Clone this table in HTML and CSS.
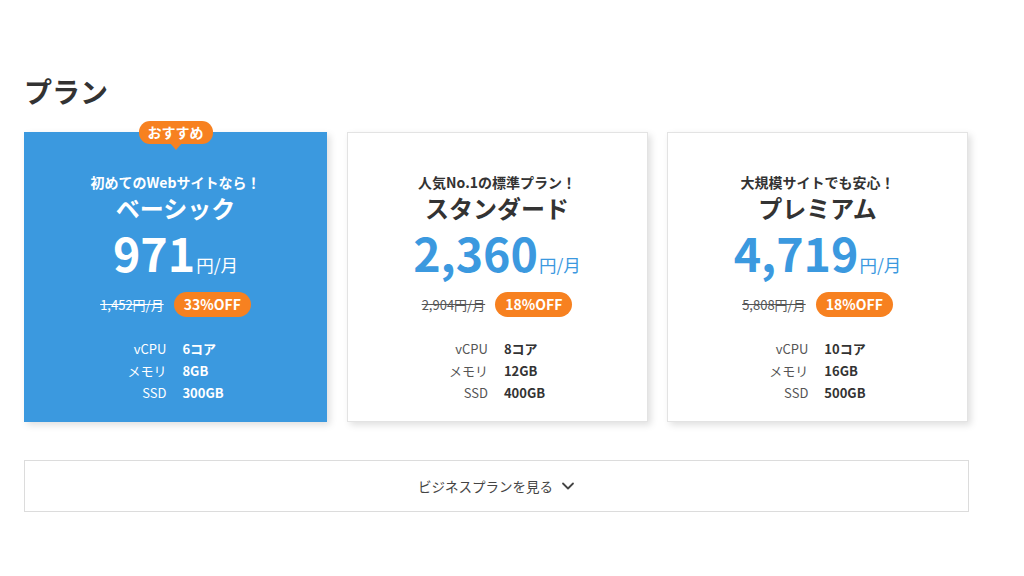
FILE: index.html
```html
<!DOCTYPE html>
<html lang="ja">
<head>
<meta charset="utf-8">
<link rel="stylesheet" href="styles.css">
</head>
<body>
<section class="plans">
  <h2 class="title">プラン</h2>
  <div class="cards">
    <div class="card card-featured">
      <div class="badge">おすすめ</div>
      <p class="lead">初めてのWebサイトなら！</p>
      <h3 class="name">ベーシック</h3>
      <p class="price"><span class="num">971</span><span class="unit">円/月</span></p>
      <div class="disc"><span class="old">1,452円/月</span><span class="off">33%OFF</span></div>
      <dl class="spec">
        <dt>vCPU</dt><dd>6コア</dd>
        <dt>メモリ</dt><dd>8GB</dd>
        <dt>SSD</dt><dd>300GB</dd>
      </dl>
    </div>
    <div class="card">
      <p class="lead">人気No.1の標準プラン！</p>
      <h3 class="name">スタンダード</h3>
      <p class="price"><span class="num">2,360</span><span class="unit">円/月</span></p>
      <div class="disc"><span class="old">2,904円/月</span><span class="off">18%OFF</span></div>
      <dl class="spec">
        <dt>vCPU</dt><dd>8コア</dd>
        <dt>メモリ</dt><dd>12GB</dd>
        <dt>SSD</dt><dd>400GB</dd>
      </dl>
    </div>
    <div class="card">
      <p class="lead">大規模サイトでも安心！</p>
      <h3 class="name">プレミアム</h3>
      <p class="price"><span class="num">4,719</span><span class="unit">円/月</span></p>
      <div class="disc"><span class="old">5,808円/月</span><span class="off">18%OFF</span></div>
      <dl class="spec">
        <dt>vCPU</dt><dd>10コア</dd>
        <dt>メモリ</dt><dd>16GB</dd>
        <dt>SSD</dt><dd>500GB</dd>
      </dl>
    </div>
  </div>
  <button class="more">ビジネスプランを見る<svg class="chev" width="14" height="14" viewBox="0 0 14 14"><path d="M2 4.5 L7 9.5 L12 4.5" fill="none" stroke="#444" stroke-width="1.8" stroke-linecap="round" stroke-linejoin="round"/></svg></button>
</section>
</body>
</html>
```

FILE: styles.css
```css
html, body {
  margin: 0;
  padding: 0;
  background: #fff;
}
body {
  font-family: "Noto Sans CJK JP", "Noto Sans", sans-serif;
  color: #333;
}
.plans {
  width: 944px;
  padding: 72px 0 0 24px;
}
.title {
  margin: 0 0 22px;
  font-size: 28px;
  font-weight: 700;
  line-height: 38px;
  color: #333;
}
.cards {
  display: grid;
  grid-template-columns: 303px 301px 301px;
  column-gap: 19.5px;
}
.card {
  position: relative;
  height: 290px;
  box-sizing: border-box;
  background: #fff;
  border: 1px solid #e3e3e3;
  box-shadow: 3px 3px 7px rgba(0, 0, 0, 0.13);
  text-align: center;
  padding-top: 38px;
}
.card-featured {
  background: #3b99df;
  border-color: #3b99df;
  color: #fff;
}
.badge {
  position: absolute;
  top: -12px;
  left: 50%;
  transform: translateX(-50%);
  background: #f78120;
  color: #fff;
  font-size: 14px;
  font-weight: 700;
  line-height: 23px;
  padding: 0 9px;
  border-radius: 11px;
  white-space: nowrap;
}
.badge::after {
  content: "";
  position: absolute;
  left: 50%;
  bottom: -6px;
  margin-left: -6px;
  border-left: 6px solid transparent;
  border-right: 6px solid transparent;
  border-top: 7px solid #f78120;
}
.lead {
  margin: 0;
  font-size: 14px;
  font-weight: 700;
  line-height: 22px;
}
.name {
  margin: 0;
  font-size: 24px;
  font-weight: 700;
  line-height: 30px;
}
.price {
  margin: 0;
  height: 58px;
  line-height: 58px;
  color: #3b99df;
}
.card-featured .price {
  color: #fff;
}
.num {
  font-size: 46.5px;
  font-weight: 700;
}
.unit {
  font-size: 17.5px;
  margin-left: 1px;
}
.disc {
  display: flex;
  justify-content: center;
  align-items: center;
  gap: 10px;
  margin-top: 11px;
  height: 25px;
}
.old {
  font-size: 13px;
  text-decoration: line-through;
  color: #555;
}
.card-featured .old {
  color: #fff;
}
.off {
  background: #f78120;
  color: #fff;
  font-size: 14px;
  font-weight: 700;
  line-height: 25px;
  padding: 0 10px;
  border-radius: 13px;
}
.spec {
  display: grid;
  grid-template-columns: auto auto;
  justify-content: center;
  column-gap: 16px;
  margin: 21px 0 0;
  font-size: 13px;
  line-height: 22px;
}
.spec dt {
  text-align: right;
  color: #555;
}
.card-featured .spec dt {
  color: #fff;
}
.spec dd {
  margin: 0;
  text-align: left;
  font-weight: 700;
}
.more {
  display: flex;
  justify-content: center;
  align-items: center;
  gap: 8px;
  width: 945px;
  height: 52px;
  margin-top: 38px;
  background: #fff;
  border: 1px solid #dcdcdc;
  font-family: "Noto Sans CJK JP", "Noto Sans", sans-serif;
  font-size: 13.5px;
  color: #444;
  padding: 0;
}
.chev {
  display: block;
}
```
